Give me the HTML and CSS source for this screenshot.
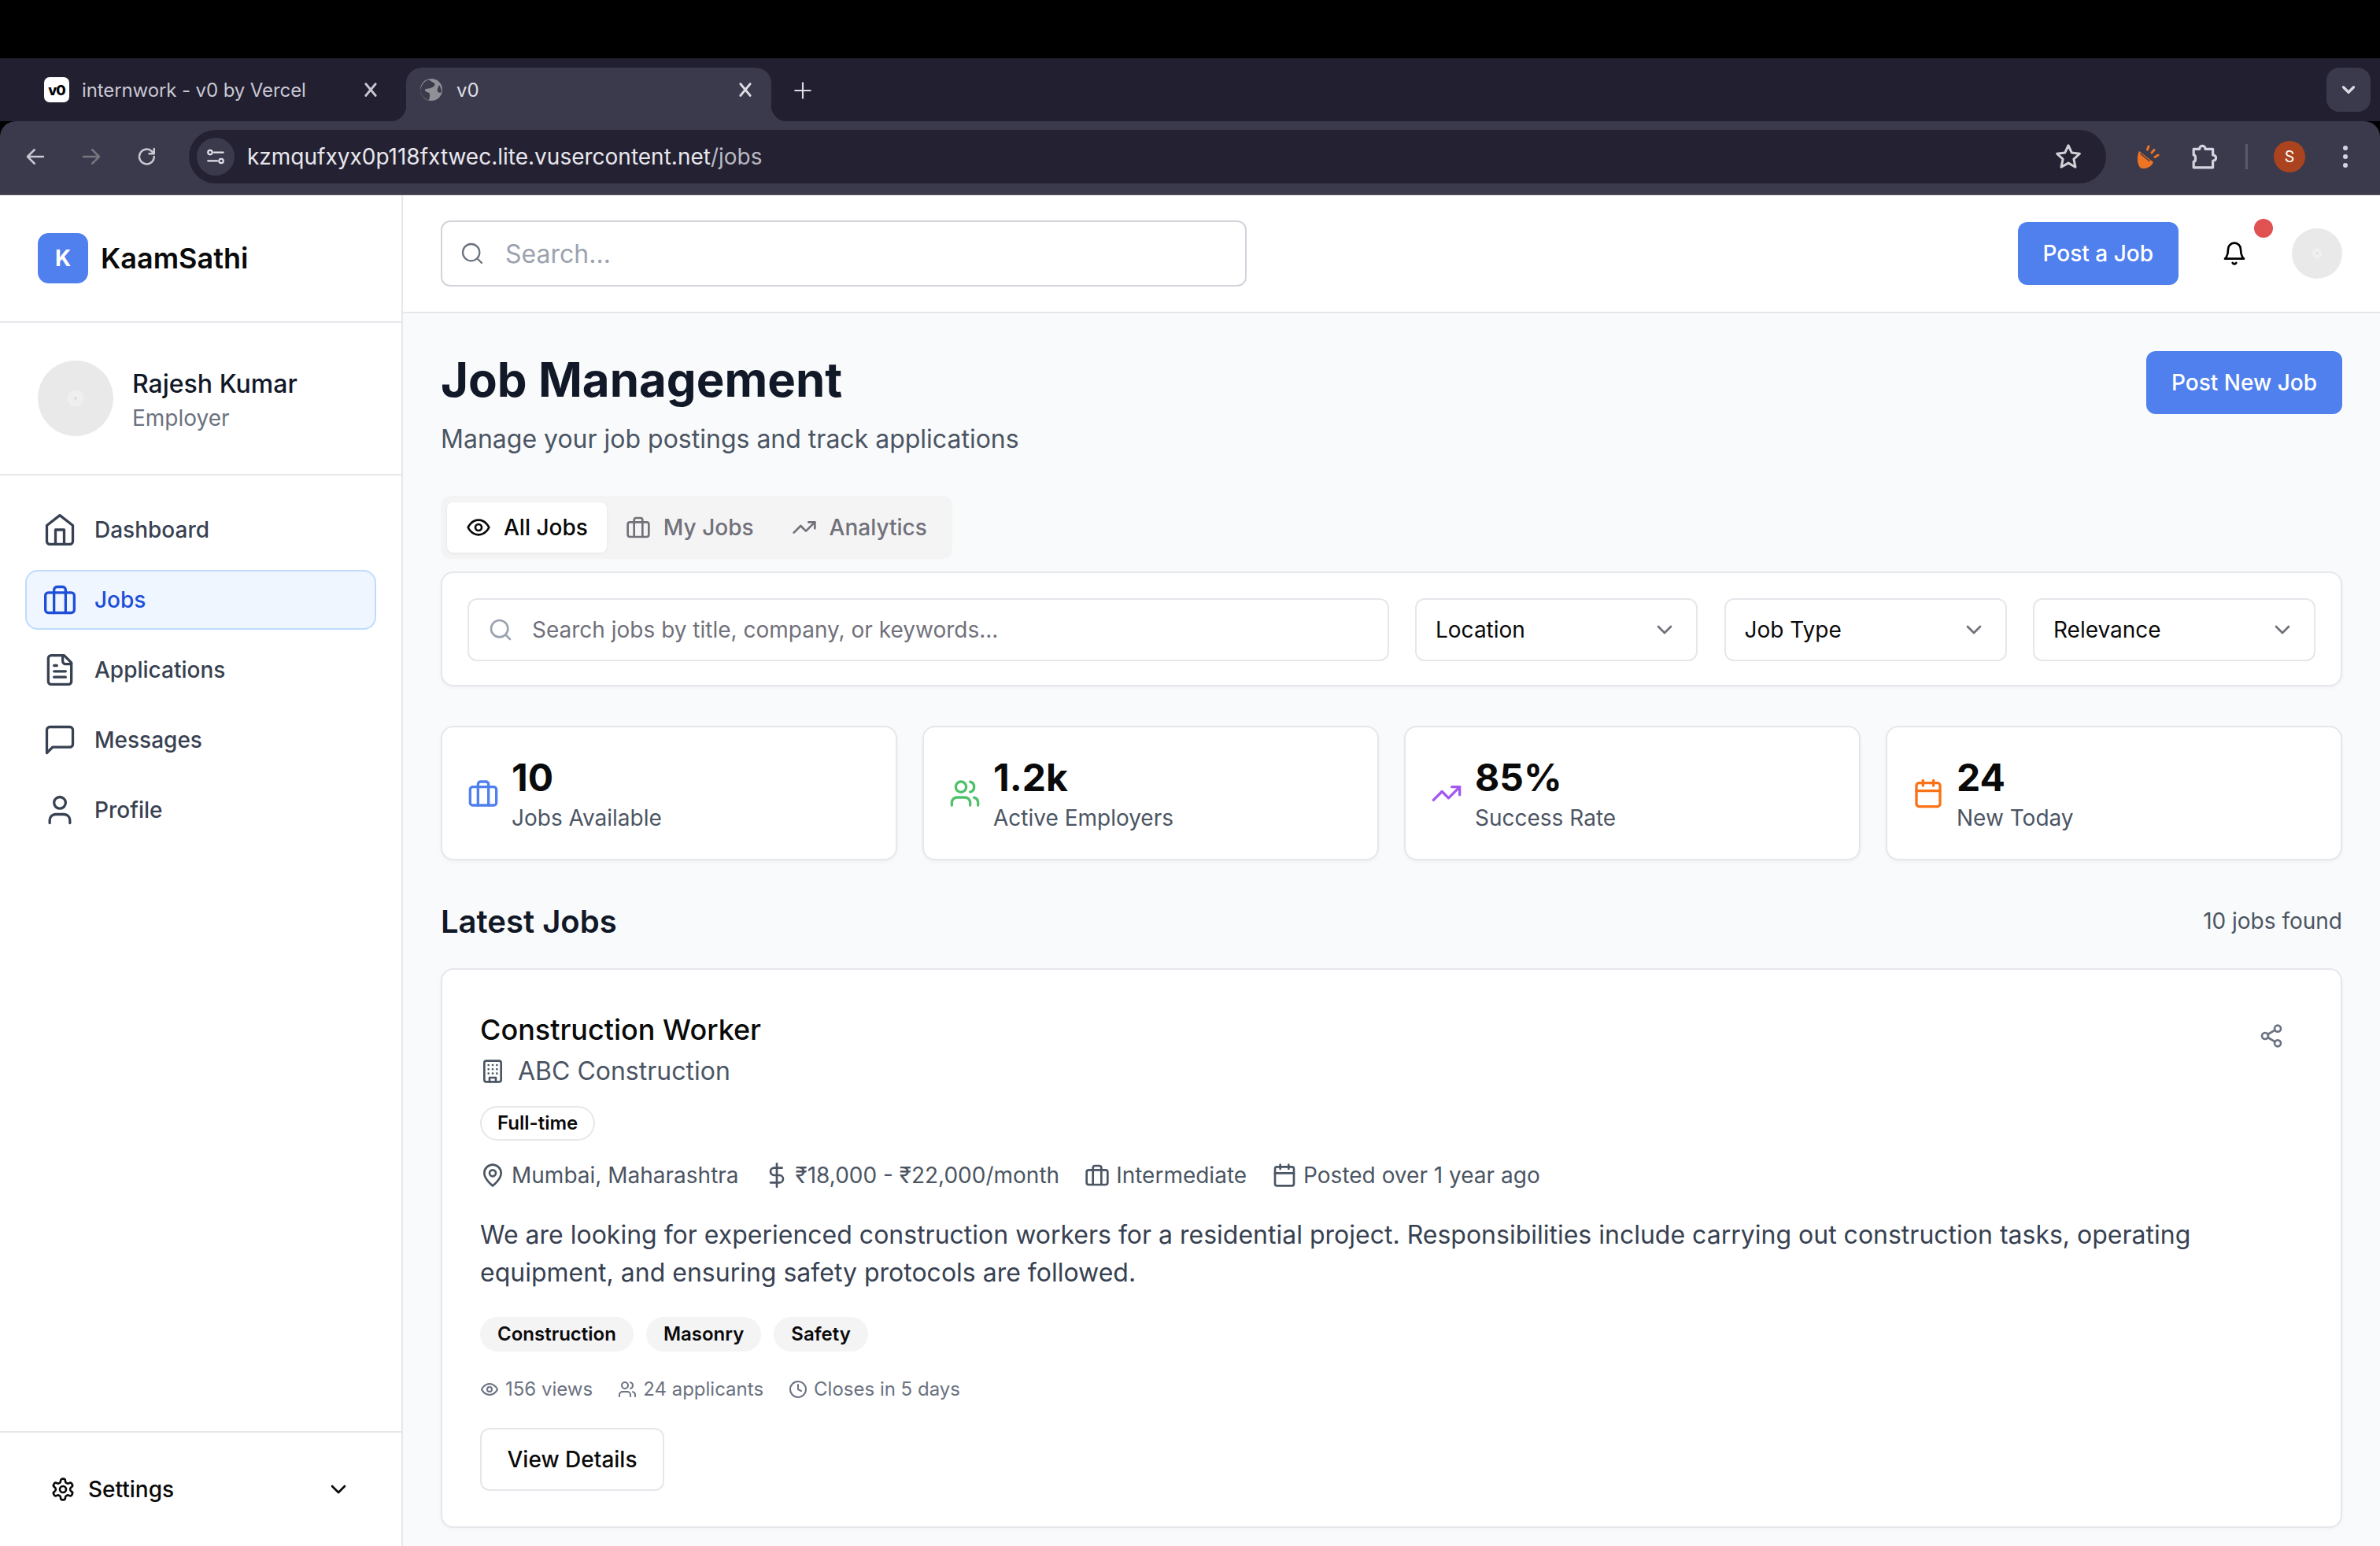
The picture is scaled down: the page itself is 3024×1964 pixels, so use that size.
FILE: index.html
```html
<!DOCTYPE html>
<html lang="en">
  <head>
    <meta charset="UTF-8" />
    <meta name="viewport" content="width=device-width, initial-scale=1.0" />
    <title>KaamSathi - Jobs</title>
    <link rel="stylesheet" href="styles.css">
  </head>
  <body>
    <svg class="sprite" xmlns="http://www.w3.org/2000/svg">
      <symbol id="i-home" viewBox="0 0 24 24"><path d="m3 9 9-7 9 7v11a2 2 0 0 1-2 2H5a2 2 0 0 1-2-2z"/><path d="M9 22V12h6v10"/></symbol>
      <symbol id="i-briefcase" viewBox="0 0 24 24"><rect x="2" y="7" width="20" height="14" rx="2"/><path d="M16 21V5a2 2 0 0 0-2-2h-4a2 2 0 0 0-2 2v16"/></symbol>
      <symbol id="i-file" viewBox="0 0 24 24"><path d="M15 2H6a2 2 0 0 0-2 2v16a2 2 0 0 0 2 2h12a2 2 0 0 0 2-2V7Z"/><path d="M14 2v4a2 2 0 0 0 2 2h4"/><path d="M10 9H8"/><path d="M16 13H8"/><path d="M16 17H8"/></symbol>
      <symbol id="i-message" viewBox="0 0 24 24"><path d="M21 15a2 2 0 0 1-2 2H7l-4 4V5a2 2 0 0 1 2-2h14a2 2 0 0 1 2 2z"/></symbol>
      <symbol id="i-user" viewBox="0 0 24 24"><path d="M19 21v-2a4 4 0 0 0-4-4H9a4 4 0 0 0-4 4v2"/><circle cx="12" cy="7" r="4"/></symbol>
      <symbol id="i-search" viewBox="0 0 24 24"><circle cx="11" cy="11" r="8"/><path d="m21 21-4.3-4.3"/></symbol>
      <symbol id="i-bell" viewBox="0 0 24 24"><path d="M6 8a6 6 0 0 1 12 0c0 7 3 9 3 9H3s3-2 3-9"/><path d="M10.3 21a1.94 1.94 0 0 0 3.4 0"/></symbol>
      <symbol id="i-eye" viewBox="0 0 24 24"><path d="M2 12s3-7 10-7 10 7 10 7-3 7-10 7-10-7-10-7Z"/><circle cx="12" cy="12" r="3"/></symbol>
      <symbol id="i-trend" viewBox="0 0 24 24"><path d="M22 7l-8.5 8.5-5-5L2 17"/><path d="M16 7h6v6"/></symbol>
      <symbol id="i-users" viewBox="0 0 24 24"><path d="M16 21v-2a4 4 0 0 0-4-4H6a4 4 0 0 0-4 4v2"/><circle cx="9" cy="7" r="4"/><path d="M22 21v-2a4 4 0 0 0-3-3.87"/><path d="M16 3.13a4 4 0 0 1 0 7.75"/></symbol>
      <symbol id="i-calendar" viewBox="0 0 24 24"><rect x="3" y="4" width="18" height="18" rx="2"/><path d="M16 2v4"/><path d="M8 2v4"/><path d="M3 10h18"/></symbol>
      <symbol id="i-chevron" viewBox="0 0 24 24"><path d="m6 9 6 6 6-6"/></symbol>
      <symbol id="i-share" viewBox="0 0 24 24"><circle cx="18" cy="5" r="3"/><circle cx="6" cy="12" r="3"/><circle cx="18" cy="19" r="3"/><path d="m8.59 13.51 6.83 3.98"/><path d="m15.41 6.51-6.82 3.98"/></symbol>
      <symbol id="i-building" viewBox="0 0 24 24"><rect x="4" y="2" width="16" height="20" rx="2"/><path d="M9 22v-4h6v4"/><path d="M8 6h.01M12 6h.01M16 6h.01M8 10h.01M12 10h.01M16 10h.01M8 14h.01M12 14h.01M16 14h.01"/></symbol>
      <symbol id="i-pin" viewBox="0 0 24 24"><path d="M20 10c0 6-8 12-8 12s-8-6-8-12a8 8 0 0 1 16 0Z"/><circle cx="12" cy="10" r="3"/></symbol>
      <symbol id="i-dollar" viewBox="0 0 24 24"><path d="M12 1v22"/><path d="M17 5H9.5a3.5 3.5 0 0 0 0 7h5a3.5 3.5 0 0 1 0 7H6"/></symbol>
      <symbol id="i-clock" viewBox="0 0 24 24"><circle cx="12" cy="12" r="10"/><path d="M12 6v6l4 2"/></symbol>
      <symbol id="i-gear" viewBox="0 0 24 24"><path d="M12.22 2h-.44a2 2 0 0 0-2 2v.18a2 2 0 0 1-1 1.73l-.43.25a2 2 0 0 1-2 0l-.15-.08a2 2 0 0 0-2.73.73l-.22.38a2 2 0 0 0 .73 2.73l.15.1a2 2 0 0 1 1 1.72v.51a2 2 0 0 1-1 1.74l-.15.09a2 2 0 0 0-.73 2.73l.22.38a2 2 0 0 0 2.73.73l.15-.08a2 2 0 0 1 2 0l.43.25a2 2 0 0 1 1 1.73V20a2 2 0 0 0 2 2h.44a2 2 0 0 0 2-2v-.18a2 2 0 0 1 1-1.73l.43-.25a2 2 0 0 1 2 0l.15.08a2 2 0 0 0 2.73-.73l.22-.39a2 2 0 0 0-.73-2.73l-.15-.08a2 2 0 0 1-1-1.74v-.5a2 2 0 0 1 1-1.74l.15-.09a2 2 0 0 0 .73-2.73l-.22-.38a2 2 0 0 0-2.73-.73l-.15.08a2 2 0 0 1-2 0l-.43-.25a2 2 0 0 1-1-1.73V4a2 2 0 0 0-2-2z"/><circle cx="12" cy="12" r="3"/></symbol>
      <symbol id="i-x" viewBox="0 0 24 24"><path d="M7 6l10 12M17 6 7 18"/></symbol>
      <symbol id="i-plus" viewBox="0 0 24 24"><path d="M12 3v18M3 12h18"/></symbol>
    </svg>

    <div class="browser">
      <div class="tabstrip">
        <div class="tab">
          <span class="favicon-v0">v0</span>
          <span class="tab-title">internwork - v0 by Vercel</span>
          <svg class="ic tab-close"><use href="#i-x"/></svg>
        </div>
        <div class="tab tab-active">
          <svg class="favicon-globe" viewBox="0 0 28 28"><circle cx="14" cy="14" r="14" fill="#8f9196"/><path d="M11 1c1 2 5 3 7 5s-2 5-5 6-6 0-7 2 3 3 5 4 1 6 0 9C5 26 1 21 0 15 1 8 5 3 11 1zM24 8c2 3 3 6 3 9-2 1-4 1-5-1s0-4 2-8z" fill="#3b3a4c"/></svg>
          <span class="tab-title">v0</span>
          <svg class="ic tab-close"><use href="#i-x"/></svg>
        </div>
        <svg class="ic new-tab"><use href="#i-plus"/></svg>
        <div class="tab-menu"><svg class="ic"><use href="#i-chevron"/></svg></div>
      </div>
      <div class="toolbar">
        <svg class="ic nav-btn" viewBox="0 0 24 24"><path d="M20 12H5M11 5l-7 7 7 7"/></svg>
        <svg class="ic nav-btn nav-dim" viewBox="0 0 24 24"><path d="M4 12h15M13 5l7 7-7 7"/></svg>
        <svg class="ic nav-btn" viewBox="0 0 24 24"><path d="M19 12a7.500 7.500 0 1 1-2.200-5.300L19 9M19 4v5h-5"/></svg>
        <div class="omnibox">
          <span class="site-btn">
            <svg class="ic" viewBox="0 0 24 24"><path d="M10 7h11M3 17h11"/><circle cx="5.500" cy="7" r="2.500"/><circle cx="18.500" cy="17" r="2.500"/></svg>
          </span>
          <span class="url">kzmqufxyx0p118fxtwec.lite.vusercontent.net<span class="url-path">/jobs</span></span>
          <svg class="ic star" viewBox="0 0 24 24"><path d="M12 2.500l2.900 6.200 6.700.8-5 4.600 1.400 6.700L12 17.400l-6 3.400 1.400-6.700-5-4.600 6.700-.8z"/></svg>
        </div>
        <svg class="ext-orange" viewBox="0 0 30 30"><path d="M4 8l18 14c-2 6-10 9-15 8C2 28 0 16 4 8z" fill="#ee7425"/><path d="M5.500 11l12 10" stroke="#3b3a4c" stroke-width="1.500"/><path d="M14.500 6l1.500-4M20 10l3-3.500M24 15.500l4-2.500" stroke="#ee7425" stroke-width="3" stroke-linecap="round"/></svg>
        <svg class="ic ext-puzzle" viewBox="0 0 32 32"><path d="M3 7h7c0-5 7-5 7 0h9v7c5 0 5 7 0 7v8H3v-7c3 0 3-8 0-8z"/></svg>
        <span class="toolbar-sep"></span>
        <span class="profile-s">S</span>
        <span class="kebab"><i></i><i></i><i></i></span>
      </div>
    </div>

    <div class="app">
      <aside class="sidebar">
        <div class="brand">
          <span class="brand-logo">K</span>
          <span class="brand-name">KaamSathi</span>
        </div>
        <div class="user-box">
          <span class="avatar avatar-lg"></span>
          <div>
            <div class="user-name">Rajesh Kumar</div>
            <div class="user-role">Employer</div>
          </div>
        </div>
        <nav class="side-nav">
          <a class="nav-item"><svg class="ic"><use href="#i-home"/></svg>Dashboard</a>
          <a class="nav-item nav-active"><svg class="ic"><use href="#i-briefcase"/></svg>Jobs</a>
          <a class="nav-item"><svg class="ic"><use href="#i-file"/></svg>Applications</a>
          <a class="nav-item"><svg class="ic"><use href="#i-message"/></svg>Messages</a>
          <a class="nav-item"><svg class="ic"><use href="#i-user"/></svg>Profile</a>
        </nav>
        <div class="side-footer">
          <svg class="ic"><use href="#i-gear"/></svg>
          <span>Settings</span>
          <svg class="ic footer-chevron"><use href="#i-chevron"/></svg>
        </div>
      </aside>

      <div class="main">
        <header class="topbar">
          <div class="top-search">
            <svg class="ic"><use href="#i-search"/></svg>
            <span>Search...</span>
          </div>
          <button class="btn-blue btn-post">Post a Job</button>
          <span class="bell-wrap">
            <svg class="ic"><use href="#i-bell"/></svg>
            <span class="bell-dot"></span>
          </span>
          <span class="avatar avatar-sm"></span>
        </header>

        <main class="content">
          <div class="page-head">
            <div>
              <h1>Job Management</h1>
              <p class="subtitle">Manage your job postings and track applications</p>
            </div>
            <button class="btn-blue">Post New Job</button>
          </div>

          <div class="tabs">
            <div class="tab-btn tab-btn-on"><svg class="ic"><use href="#i-eye"/></svg>All Jobs</div>
            <div class="tab-btn"><svg class="ic"><use href="#i-briefcase"/></svg>My Jobs</div>
            <div class="tab-btn"><svg class="ic"><use href="#i-trend"/></svg>Analytics</div>
          </div>

          <div class="card filters">
            <div class="job-search">
              <svg class="ic"><use href="#i-search"/></svg>
              <span>Search jobs by title, company, or keywords...</span>
            </div>
            <div class="select"><span>Location</span><svg class="ic"><use href="#i-chevron"/></svg></div>
            <div class="select"><span>Job Type</span><svg class="ic"><use href="#i-chevron"/></svg></div>
            <div class="select"><span>Relevance</span><svg class="ic"><use href="#i-chevron"/></svg></div>
          </div>

          <div class="stats">
            <div class="card stat">
              <svg class="ic c-blue"><use href="#i-briefcase"/></svg>
              <div><div class="stat-num">10</div><div class="stat-label">Jobs Available</div></div>
            </div>
            <div class="card stat">
              <svg class="ic c-green"><use href="#i-users"/></svg>
              <div><div class="stat-num">1.2k</div><div class="stat-label">Active Employers</div></div>
            </div>
            <div class="card stat">
              <svg class="ic c-purple"><use href="#i-trend"/></svg>
              <div><div class="stat-num">85%</div><div class="stat-label">Success Rate</div></div>
            </div>
            <div class="card stat">
              <svg class="ic c-orange"><use href="#i-calendar"/></svg>
              <div><div class="stat-num">24</div><div class="stat-label">New Today</div></div>
            </div>
          </div>

          <div class="list-head">
            <h2>Latest Jobs</h2>
            <span class="found">10 jobs found</span>
          </div>

          <article class="card job">
            <svg class="ic job-share"><use href="#i-share"/></svg>
            <h3>Construction Worker</h3>
            <div class="company"><svg class="ic"><use href="#i-building"/></svg>ABC Construction</div>
            <span class="pill pill-outline">Full-time</span>
            <div class="meta">
              <span><svg class="ic"><use href="#i-pin"/></svg>Mumbai, Maharashtra</span>
              <span><svg class="ic"><use href="#i-dollar"/></svg>₹18,000 - ₹22,000/month</span>
              <span><svg class="ic"><use href="#i-briefcase"/></svg>Intermediate</span>
              <span><svg class="ic"><use href="#i-calendar"/></svg>Posted over 1 year ago</span>
            </div>
            <p class="desc">We are looking for experienced construction workers for a residential project. Responsibilities include carrying out construction tasks, operating equipment, and ensuring safety protocols are followed.</p>
            <div class="skills">
              <span class="pill">Construction</span>
              <span class="pill">Masonry</span>
              <span class="pill">Safety</span>
            </div>
            <div class="job-stats">
              <span><svg class="ic"><use href="#i-eye"/></svg>156 views</span>
              <span><svg class="ic"><use href="#i-users"/></svg>24 applicants</span>
              <span><svg class="ic"><use href="#i-clock"/></svg>Closes in 5 days</span>
            </div>
            <button class="btn-outline">View Details</button>
          </article>
        </main>
      </div>
    </div>
  </body>
</html>
```

FILE: styles.css
```css
* {
  box-sizing: border-box;
}
html,
body {
  margin: 0;
  height: 1964px;
  overflow: hidden;
}
body {
  font-family: Inter, "Noto Sans", sans-serif;
  background-color: #000;
  padding-top: 74px;
  color: #0a0a0a;
}
h1,
h2,
h3,
p {
  margin: 0;
}
button {
  font-family: inherit;
  cursor: pointer;
}
.sprite {
  display: none;
}
.ic {
  display: block;
  flex: none;
  fill: none;
  stroke: currentColor;
  stroke-width: 2;
  stroke-linecap: round;
  stroke-linejoin: round;
}

/* browser chrome */
.tabstrip {
  display: flex;
  align-items: flex-end;
  height: 80px;
  padding-left: 36px;
  background-color: #211f30;
  color: #dcdbe4;
}
.tab {
  display: flex;
  align-items: center;
  width: 480px;
  height: 68px;
  padding: 0 30px 12px 20px;
  font-size: 24px;
  letter-spacing: -0.1px;
  color: #c9c8d2;
}
.tab-active {
  position: relative;
  width: 464px;
  padding: 0 18px 12px 18px;
  background-color: #3b3a4c;
  border-radius: 20px 20px 0 0;
  color: #dfdee6;
}
.tab-active::before,
.tab-active::after {
  content: "";
  position: absolute;
  bottom: 0;
  width: 20px;
  height: 20px;
}
.tab-active::before {
  left: -20px;
  background: radial-gradient(circle at 0 0, transparent 20px, #3b3a4c 20.5px);
}
.tab-active::after {
  right: -20px;
  background: radial-gradient(circle at 100% 0, transparent 20px, #3b3a4c 20.5px);
}
.favicon-v0 {
  display: flex;
  align-items: center;
  justify-content: center;
  width: 32px;
  height: 32px;
  margin-right: 16px;
  background-color: #fff;
  border-radius: 7px;
  font-size: 18px;
  font-weight: 800;
  letter-spacing: -1px;
  color: #000;
}
.favicon-globe {
  width: 28px;
  height: 28px;
  margin-right: 18px;
}
.tab-title {
  flex: 1;
  white-space: nowrap;
}
.tab-close {
  width: 30px;
  height: 30px;
  stroke-width: 2.2;
}
.new-tab {
  width: 26px;
  height: 26px;
  margin: 0 0 26px 27px;
}
.tab-menu {
  display: flex;
  align-items: center;
  justify-content: center;
  width: 56px;
  height: 56px;
  margin: 0 12px 12px auto;
  border-radius: 16px;
  background-color: #3b3a4c;
}
.tab-menu .ic {
  width: 26px;
  height: 26px;
  stroke-width: 3;
}
.toolbar {
  display: flex;
  align-items: center;
  height: 94px;
  padding: 0 16px 2px 30px;
  background-color: #3b3a4c;
  border-radius: 20px 20px 0 0;
  border-bottom: 2px solid #4a4957;
  color: #c9c8d2;
}
.nav-btn {
  width: 30px;
  height: 30px;
  margin-right: 41px;
  stroke-width: 2;
}
.nav-dim {
  color: #77767f;
}
.omnibox {
  display: flex;
  align-items: center;
  width: 2436px;
  height: 68px;
  margin-left: -3px;
  padding: 0 30px 0 10px;
  background-color: #242232;
  border-radius: 34px;
}
.site-btn {
  display: flex;
  align-items: center;
  justify-content: center;
  width: 48px;
  height: 48px;
  margin-right: 16px;
  border-radius: 50%;
  background-color: #3b3a4c;
  color: #e3e2ea;
}
.site-btn .ic {
  width: 26px;
  height: 26px;
}
.url {
  flex: 1;
  font-size: 28px;
  color: #e8e7ee;
}
.url-path {
  color: #bab9c4;
}
.star {
  width: 36px;
  height: 36px;
  color: #d0d0d6;
  stroke-width: 2;
}
.ext-orange {
  flex: none;
  width: 30px;
  height: 30px;
  margin-left: 38px;
}
.ext-puzzle {
  width: 34px;
  height: 34px;
  margin-left: 40px;
  color: #d5d3e0;
  stroke-width: 3;
}
.toolbar-sep {
  flex: none;
  width: 3px;
  height: 32px;
  margin: 0 33px 0 35px;
  background-color: #5b5a69;
}
.profile-s {
  display: flex;
  align-items: center;
  justify-content: center;
  flex: none;
  width: 40px;
  height: 40px;
  border-radius: 50%;
  background-color: #ab431e;
  font-family: Roboto, sans-serif;
  font-size: 20px;
  color: #fff;
}
.kebab {
  display: flex;
  flex-direction: column;
  gap: 5px;
  margin-left: 48px;
}
.kebab i {
  width: 6px;
  height: 6px;
  border-radius: 50%;
  background-color: #d5d3e0;
}

/* app shell */
.app {
  display: flex;
  height: 1716px;
  background-color: #f9fafb;
}
.sidebar {
  display: flex;
  flex-direction: column;
  flex: none;
  width: 512px;
  background-color: #fff;
  border-right: 2px solid #e5e7eb;
}
.brand {
  display: flex;
  align-items: center;
  gap: 16px;
  height: 162px;
  padding-left: 48px;
  border-bottom: 2px solid #e5e7eb;
}
.brand-logo {
  display: flex;
  align-items: center;
  justify-content: center;
  width: 64px;
  height: 64px;
  border-radius: 14px;
  background-color: #4f80ee;
  font-size: 28px;
  font-weight: 700;
  color: #fff;
}
.brand-name {
  font-size: 36px;
  font-weight: 600;
}
.user-box {
  display: flex;
  align-items: center;
  gap: 24px;
  height: 194px;
  padding-left: 48px;
  border-bottom: 2px solid #e5e7eb;
}
.avatar {
  display: block;
  flex: none;
  border-radius: 50%;
}
.avatar-lg {
  width: 96px;
  height: 96px;
  background: radial-gradient(circle, #dcdcdc 0, #dcdcdc 1.5px, #efefef 2px, #efefef 10px, #e9e9e9 11px);
}
.avatar-sm {
  width: 64px;
  height: 64px;
  background: radial-gradient(circle, #d8d8d8 0, #d8d8d8 1px, #efefef 1.5px, #efefef 6px, #e9e9e9 7px);
}
.user-box > div {
  padding-top: 3px;
}
.user-name {
  font-size: 32px;
  font-weight: 500;
  line-height: 46px;
  color: #111827;
}
.user-role {
  font-size: 28px;
  line-height: 40px;
  color: #6b7280;
}
.side-nav {
  display: flex;
  flex-direction: column;
  gap: 13px;
  padding: 31px 32px 0;
}
.nav-item {
  display: flex;
  align-items: center;
  gap: 22px;
  height: 76px;
  padding-left: 20px;
  border: 2px solid transparent;
  border-radius: 16px;
  font-size: 28px;
  font-weight: 500;
  color: #374151;
}
.nav-item .ic {
  width: 44px;
  height: 44px;
  stroke-width: 1.8;
}
.nav-active {
  background-color: #eff6ff;
  border-color: #bfdbfe;
  color: #1d4ed8;
}
.side-footer {
  display: flex;
  align-items: center;
  gap: 16px;
  height: 146px;
  margin-top: auto;
  padding: 0 64px 0 64px;
  border-top: 2px solid #e5e7eb;
  font-size: 28px;
  font-weight: 500;
}
.side-footer .ic {
  width: 32px;
  height: 32px;
}
.side-footer .footer-chevron {
  margin-left: auto;
  width: 32px;
  height: 32px;
}

.main {
  flex: 1;
  min-width: 0;
}
.topbar {
  display: flex;
  align-items: center;
  height: 150px;
  padding: 0 48px;
  background-color: #fff;
  border-bottom: 2px solid #e5e7eb;
}
.top-search {
  display: flex;
  align-items: center;
  gap: 26px;
  width: 1024px;
  height: 84px;
  margin-right: auto;
  padding-left: 22px;
  background-color: #fff;
  border: 2px solid #d1d5db;
  border-radius: 12px;
  font-size: 32px;
  color: #9ca3af;
}
.top-search .ic {
  width: 32px;
  height: 32px;
  color: #6b7280;
  stroke-width: 1.7;
}
.btn-blue {
  height: 80px;
  padding: 0 32px;
  border: none;
  border-radius: 12px;
  background-color: #4f80ee;
  font-size: 28px;
  font-weight: 500;
  color: #fff;
}
.btn-post {
  margin-right: 50px;
}
.bell-wrap {
  position: relative;
  width: 40px;
  margin-right: 54px;
  color: #000;
}
.bell-wrap .ic {
  width: 32px;
  height: 32px;
  margin-left: 5px;
}
.bell-dot {
  position: absolute;
  top: -28px;
  right: -30px;
  width: 24px;
  height: 24px;
  border-radius: 50%;
  background-color: #e05252;
}

.content {
  padding: 48px 48px 0;
}
.page-head {
  display: flex;
  justify-content: space-between;
  align-items: flex-start;
}
h1 {
  font-size: 60px;
  font-weight: 700;
  line-height: 72px;
  color: #111827;
}
.subtitle {
  margin-top: 12px;
  font-size: 32px;
  line-height: 56px;
  color: #4b5563;
}
.tabs {
  display: inline-flex;
  gap: 0;
  height: 80px;
  margin-top: 44px;
  padding: 8px;
  border-radius: 12px;
  background-color: #f4f4f5;
}
.tab-btn {
  display: flex;
  align-items: center;
  gap: 16px;
  padding: 0 24px;
  border-radius: 8px;
  font-size: 28px;
  font-weight: 500;
  color: #71717a;
}
.tab-btn .ic {
  width: 32px;
  height: 32px;
}
.tab-btn-on {
  background-color: #fff;
  color: #0a0a0a;
  box-shadow: 0 1px 4px rgba(0, 0, 0, 0.06);
}
.card {
  background-color: #fff;
  border: 2px solid #e5e7eb;
  border-radius: 16px;
  box-shadow: 0 2px 4px rgba(0, 0, 0, 0.04);
}
.filters {
  display: flex;
  gap: 33.5px;
  height: 146px;
  margin-top: 16px;
  padding: 32px;
}
.job-search {
  display: flex;
  align-items: center;
  flex: 1;
  gap: 24px;
  height: 80px;
  padding-left: 24px;
  border: 2px solid #e5e7eb;
  border-radius: 12px;
  font-size: 28px;
  color: #71717a;
}
.job-search .ic {
  width: 32px;
  height: 32px;
  color: #9ca3af;
}
.select {
  display: flex;
  align-items: center;
  justify-content: space-between;
  width: 359px;
  height: 80px;
  padding: 0 24px;
  border: 2px solid #e5e7eb;
  border-radius: 12px;
  font-size: 28px;
}
.select .ic {
  width: 32px;
  height: 32px;
  color: #71717a;
}
.stats {
  display: grid;
  grid-template-columns: repeat(4, 1fr);
  gap: 32px;
  margin-top: 50px;
}
.stat {
  display: flex;
  align-items: center;
  gap: 16px;
  height: 171px;
  padding: 0 32px;
}
.stat .ic {
  width: 40px;
  height: 40px;
}
.c-blue {
  color: #4f80ee;
}
.c-green {
  color: #4fc16a;
}
.c-purple {
  color: #a259f0;
}
.c-orange {
  color: #f97316;
}
.stat-num {
  font-size: 48px;
  font-weight: 700;
  line-height: 63px;
  color: #0a0a0a;
}
.stat-label {
  font-size: 28px;
  line-height: 40px;
  color: #4b5563;
}
.list-head {
  display: flex;
  justify-content: space-between;
  align-items: center;
  height: 56px;
  margin-top: 49px;
}
h2 {
  font-size: 40px;
  font-weight: 600;
  color: #111827;
}
.found {
  font-size: 28px;
  color: #4b5563;
}
.job {
  position: relative;
  height: 711px;
  margin-top: 32px;
  padding: 53px 48px 0;
}
.job-share {
  position: absolute;
  top: 68px;
  right: 72px;
  width: 32px;
  height: 32px;
  color: #6b7280;
}
h3 {
  font-size: 36px;
  font-weight: 500;
  line-height: 46px;
}
.company {
  display: flex;
  align-items: center;
  gap: 16px;
  margin-top: 6px;
  font-size: 32px;
  line-height: 48px;
  color: #4b5563;
}
.company .ic {
  width: 32px;
  height: 32px;
}
.pill {
  display: inline-block;
  padding: 0 22px;
  height: 44px;
  border-radius: 22px;
  background-color: #f4f4f5;
  font-size: 24px;
  font-weight: 600;
  line-height: 44px;
}
.pill-outline {
  margin-top: 20px;
  background-color: #fff;
  box-shadow: inset 0 0 0 2px #e5e7eb;
}
.meta {
  display: flex;
  gap: 32px;
  margin-top: 24px;
  font-size: 28px;
  line-height: 40px;
  color: #4b5563;
}
.meta span,
.job-stats span {
  display: flex;
  align-items: center;
  gap: 8px;
}
.meta .ic {
  width: 32px;
  height: 32px;
}
.desc {
  margin-top: 32px;
  font-size: 32px;
  line-height: 48px;
  color: #374151;
}
.skills {
  display: flex;
  gap: 16px;
  margin-top: 32px;
}
.job-stats {
  display: flex;
  gap: 32px;
  margin-top: 28px;
  font-size: 24px;
  line-height: 40px;
  color: #6b7280;
}
.job-stats .ic {
  width: 24px;
  height: 24px;
}
.btn-outline {
  display: block;
  width: 234px;
  height: 80px;
  margin-top: 29px;
  background-color: #fff;
  border: 2px solid #e5e7eb;
  border-radius: 12px;
  font-size: 28px;
  font-weight: 500;
  color: #0a0a0a;
}
```
